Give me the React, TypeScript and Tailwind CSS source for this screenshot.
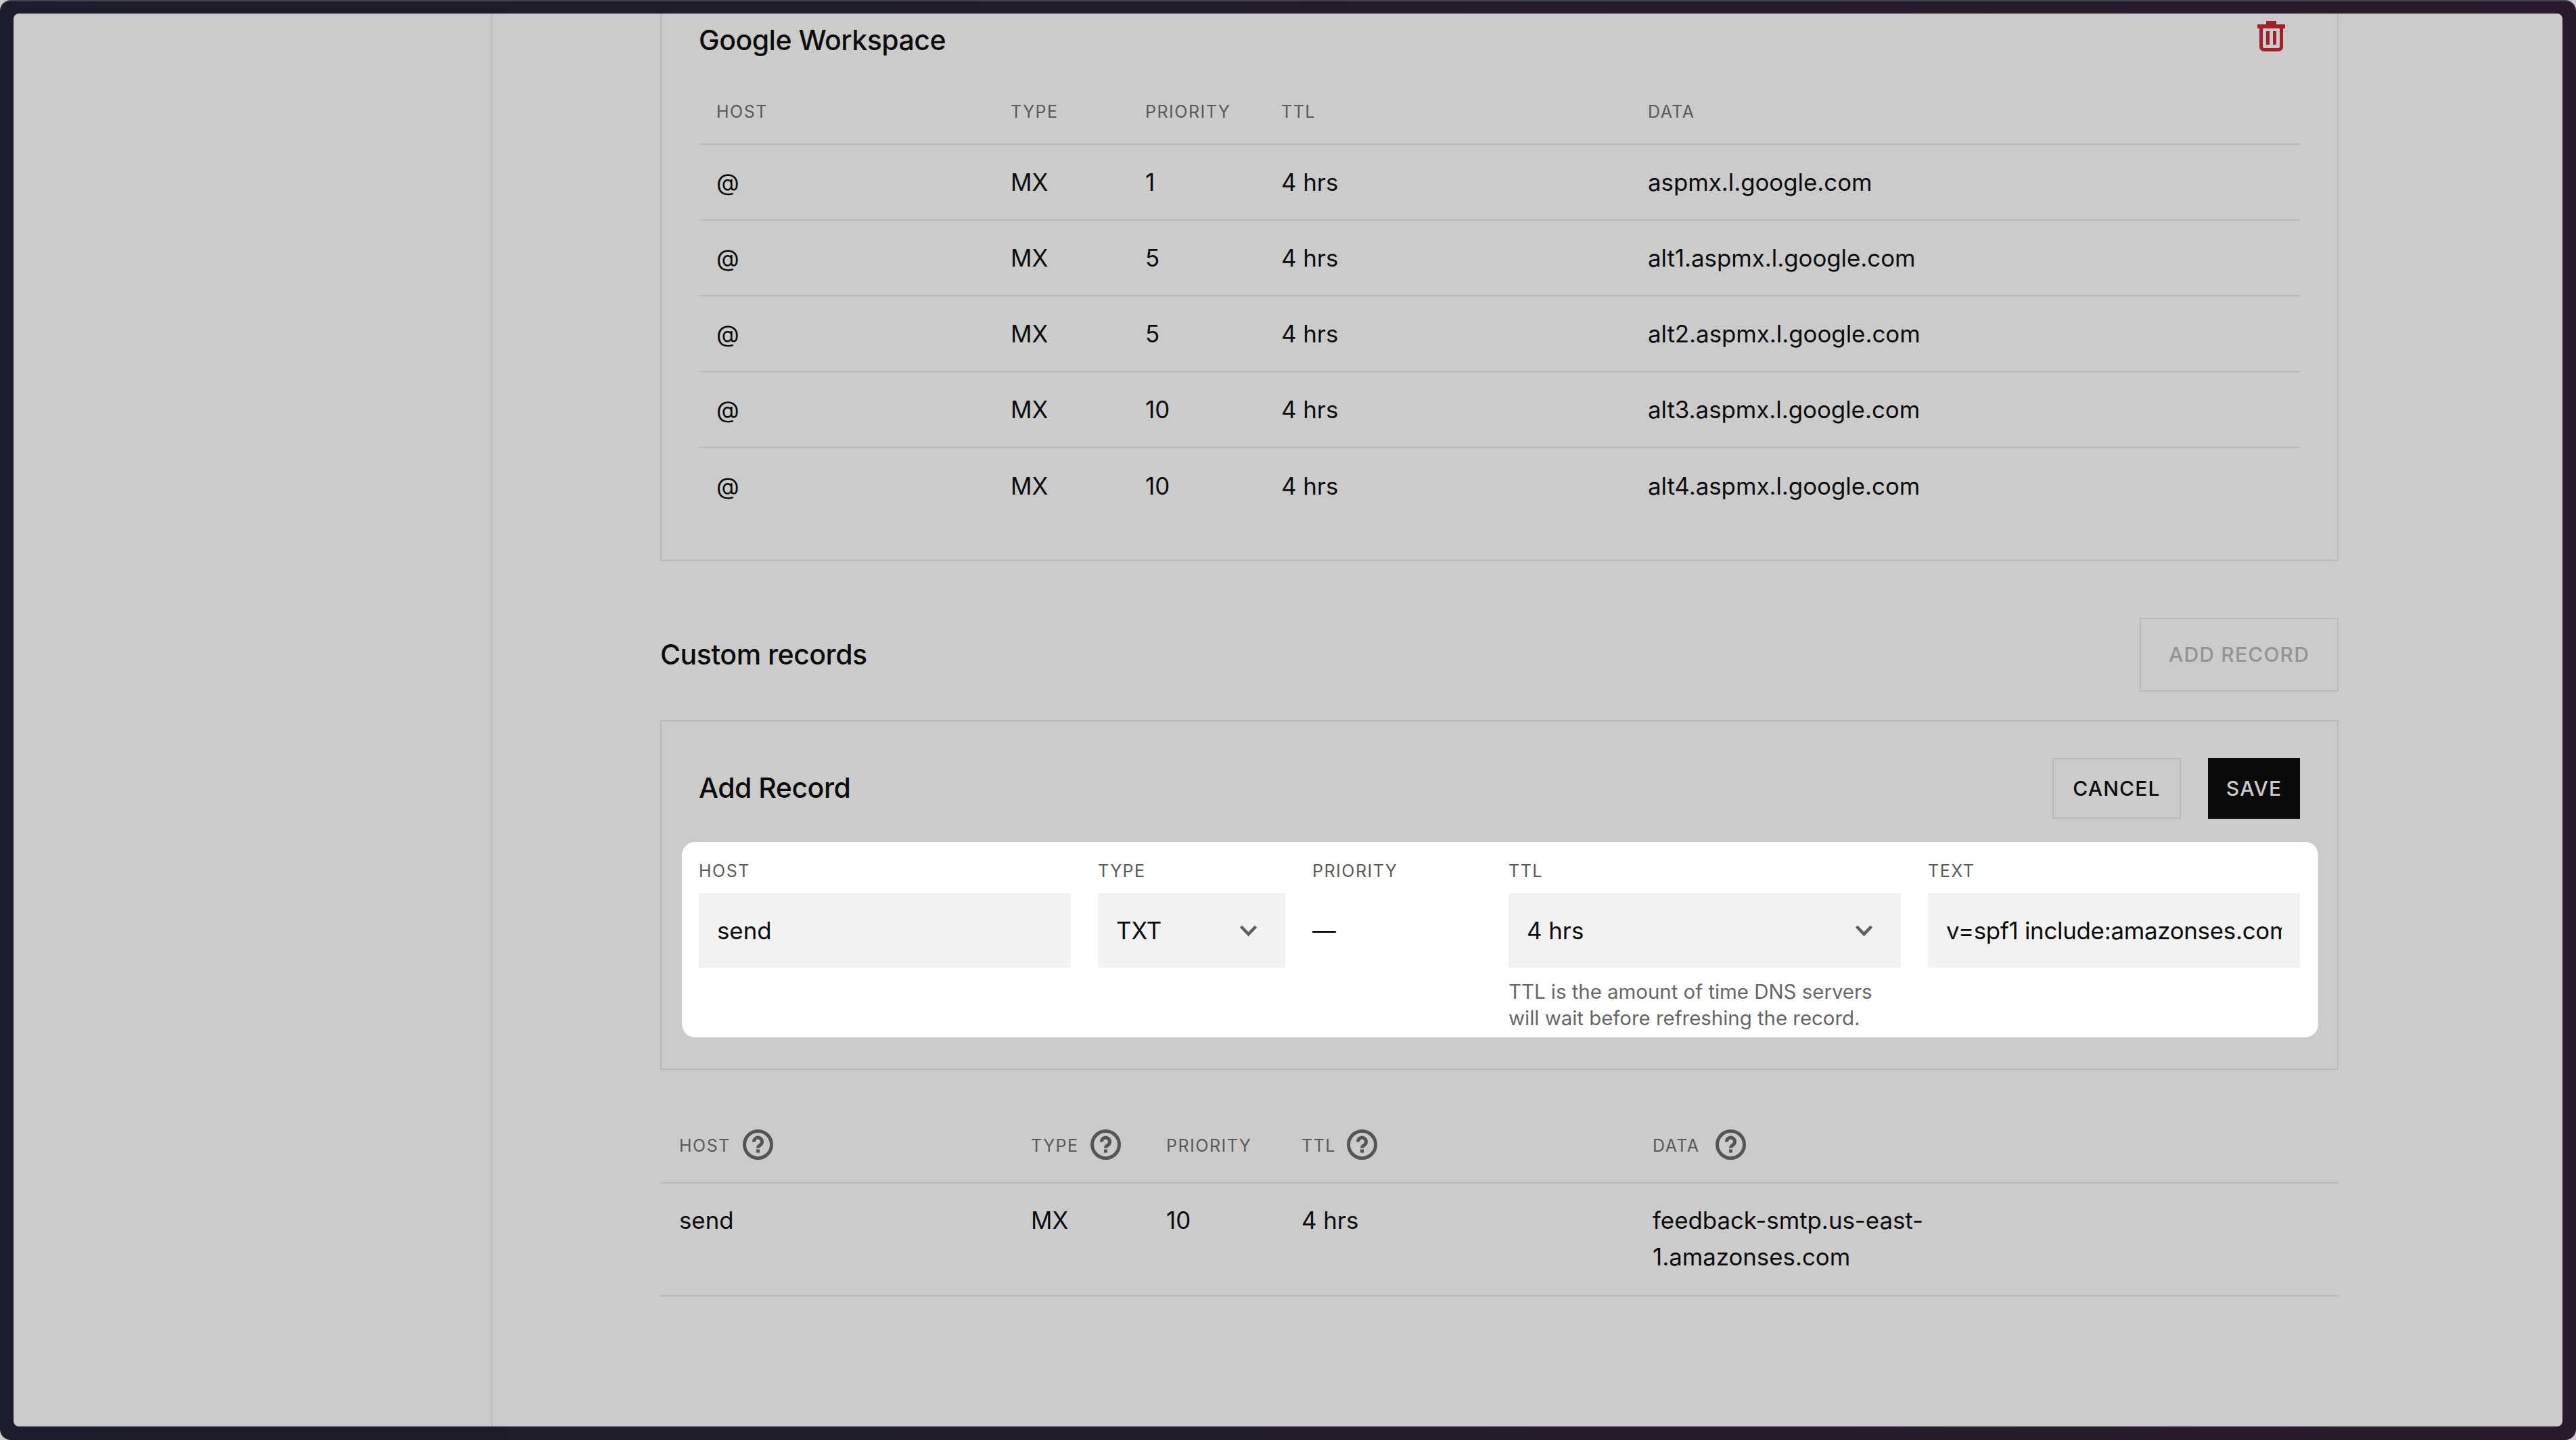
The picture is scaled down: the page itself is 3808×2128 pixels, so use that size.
const rows = [
  { prio: "1", data: "aspmx.l.google.com" },
  { prio: "5", data: "alt1.aspmx.l.google.com" },
  { prio: "5", data: "alt2.aspmx.l.google.com" },
  { prio: "10", data: "alt3.aspmx.l.google.com" },
  { prio: "10", data: "alt4.aspmx.l.google.com" },
];

function TrashIcon() {
  return (
    <svg width="41" height="45" viewBox="0 0 41 45" className="mt-[11px] shrink-0" fill="none">
      <rect x="13" y="0" width="15" height="6" fill="#a0202c" />
      <rect x="0" y="5" width="41" height="6" fill="#a0202c" />
      <path d="M5.5 10V38a4.5 4.5 0 0 0 4.5 4.5H31a4.5 4.5 0 0 0 4.5-4.5V10" stroke="#a0202c" strokeWidth="5" />
      <rect x="13" y="15" width="5" height="20" fill="#a0202c" />
      <rect x="23" y="15" width="5" height="20" fill="#a0202c" />
    </svg>
  );
}

function HelpIcon() {
  return (
    <svg width="45" height="45" viewBox="0 0 45 45" fill="none" className="shrink-0">
      <circle cx="22.5" cy="22.5" r="20" stroke="#555555" strokeWidth="5" />
      <path d="M16.5 18.5a6 6 0 1 1 9.500 4.500c-2.500 1.500-3.500 2.800-3.500 4.500" stroke="#555555" strokeWidth="5" />
      <rect x="20" y="29.500" width="5" height="5" fill="#555555" />
    </svg>
  );
}

function Chevron() {
  return (
    <svg width="25" height="18" viewBox="0 0 25 18" fill="none" className="shrink-0">
      <path d="M1.500 3l11 11.500L23.500 3" stroke="#5f5f5f" strokeWidth="4.500" />
    </svg>
  );
}

function Label({ children }: { children: React.ReactNode }) {
  return <span className="mt-[4px] text-[25px] tracking-[1.5px] text-[#595959]">{children}</span>;
}

export default function App() {
  return (
    <div className="h-[2128px] w-[3808px] overflow-hidden bg-[#cbcbcb] font-['Inter',sans-serif] text-[34.8px] text-[#0b0b0b]">
      <div className="h-full rounded-[16px] border-t-2 border-[#45434f] bg-gradient-to-r from-[#1c1d2c] to-[#2a1a2c] px-[20px] pb-[20px] pt-[18px]">
        <div className="flex h-full overflow-hidden rounded-[8px] bg-[#cbcbcb]">
          <div className="w-[708px] shrink-0 border-r-2 border-[#b9b9b9]" />
          <div className="ml-[248px] w-[2481px] shrink-0">
            {/* Google Workspace card */}
            <div className="border-x-2 border-b-2 border-[#b9b9b9] pb-[53px] pl-[55px] pr-[55px]">
              <div className="flex h-[76px] items-start justify-between pr-[22px]">
                <h2 className="self-center pt-[4px] text-[41px] font-medium tracking-[-0.5px]">Google Workspace</h2>
                <TrashIcon />
              </div>
              <div className="mt-[20px] grid h-[98px] grid-cols-[435px_199px_201px_542px_1fr] items-center border-b-2 border-[#b9b9b9] pl-[26px]">
                <Label>HOST</Label>
                <Label>TYPE</Label>
                <Label>PRIORITY</Label>
                <Label>TTL</Label>
                <Label>DATA</Label>
              </div>
              {rows.map((r, i) => (
                <div
                  key={r.data}
                  className={`grid h-[112px] grid-cols-[435px_199px_201px_542px_1fr] items-center pl-[26px] ${
                    i < rows.length - 1 ? "border-b-2 border-[#b9b9b9]" : ""
                  }`}
                >
                  <span>@</span>
                  <span>MX</span>
                  <span>{r.prio}</span>
                  <span>4 hrs</span>
                  <span>{r.data}</span>
                </div>
              ))}
            </div>

            {/* Custom records */}
            <div className="mt-[84px] flex items-center justify-between">
              <h2 className="text-[41px] font-medium tracking-[-0.5px]">Custom records</h2>
              <button className="h-[109px] w-[294px] border-2 border-[#b9b9b9] text-[30px] font-medium tracking-[1.2px] text-[#939393]">
                ADD RECORD
              </button>
            </div>

            <div className="mt-[42px] h-[517px] border-2 border-[#b9b9b9] pl-[30px] pr-[28px] pt-[54px]">
              <div className="flex h-[90px] items-center justify-between pl-[25px] pr-[27px]">
                <h2 className="text-[41px] font-medium tracking-[-0.5px]">Add Record</h2>
                <div className="flex gap-[40px]">
                  <button className="h-[90px] w-[190px] border-2 border-[#b9b9b9] text-[30px] font-medium tracking-[1.2px]">
                    CANCEL
                  </button>
                  <button className="h-[90px] w-[136px] bg-[#0b0b0b] text-[30px] font-medium tracking-[1.2px] text-[#cbcbcb]">
                    SAVE
                  </button>
                </div>
              </div>
              <div className="mt-[34px] flex h-[289px] gap-[40px] rounded-[20px] bg-white pl-[25px] pr-[27px] pt-[22px]">
                <div className="w-[550px] shrink-0">
                  <div className="mb-[14px] flex h-[40px] items-center"><Label>HOST</Label></div>
                  <div className="flex h-[110px] items-center bg-[#f2f2f2] px-[27px]">send</div>
                </div>
                <div className="w-[277px] shrink-0">
                  <div className="mb-[14px] flex h-[40px] items-center"><Label>TYPE</Label></div>
                  <div className="flex h-[110px] items-center justify-between bg-[#f2f2f2] pl-[27px] pr-[42px]">
                    TXT <Chevron />
                  </div>
                </div>
                <div className="w-[250px] shrink-0">
                  <div className="mb-[14px] flex h-[40px] items-center"><Label>PRIORITY</Label></div>
                  <div className="flex h-[110px] items-center">—</div>
                </div>
                <div className="w-[580px] shrink-0">
                  <div className="mb-[14px] flex h-[40px] items-center"><Label>TTL</Label></div>
                  <div className="flex h-[110px] items-center justify-between bg-[#f2f2f2] pl-[27px] pr-[42px]">
                    4 hrs <Chevron />
                  </div>
                  <p className="mt-[16px] text-[29.4px] leading-[39px] text-[#666666]">
                    TTL is the amount of time DNS servers
                    <br />
                    will wait before refreshing the record.
                  </p>
                </div>
                <div className="w-[550px] shrink-0">
                  <div className="mb-[14px] flex h-[40px] items-center"><Label>TEXT</Label></div>
                  <div className="h-[110px] bg-[#f2f2f2] px-[27px]">
                    <div className="flex h-full items-center overflow-hidden whitespace-nowrap tracking-[-0.25px]">
                      v=spf1 include:amazonses.com
                    </div>
                  </div>
                </div>
              </div>
            </div>

            {/* Existing custom records */}
            <div className="mt-[55px] grid h-[113px] grid-cols-[520px_200px_200px_519px_1fr] items-center border-b-2 border-[#b9b9b9] pl-[28px]">
              <div className="flex items-center gap-[18px]"><Label>HOST</Label><HelpIcon /></div>
              <div className="flex items-center gap-[17px]"><Label>TYPE</Label><HelpIcon /></div>
              <Label>PRIORITY</Label>
              <div className="flex items-center gap-[16px]"><Label>TTL</Label><HelpIcon /></div>
              <div className="flex items-center gap-[23px]"><Label>DATA</Label><HelpIcon /></div>
            </div>
            <div className="grid grid-cols-[520px_200px_200px_519px_1fr] border-b-2 border-[#b9b9b9] pb-[30px] pl-[28px] pt-[27px] leading-[54px]">
              <span>send</span>
              <span>MX</span>
              <span>10</span>
              <span>4 hrs</span>
              <span>
                feedback-smtp.us-east-
                <br />
                1.amazonses.com
              </span>
            </div>
          </div>
        </div>
      </div>
    </div>
  );
}
